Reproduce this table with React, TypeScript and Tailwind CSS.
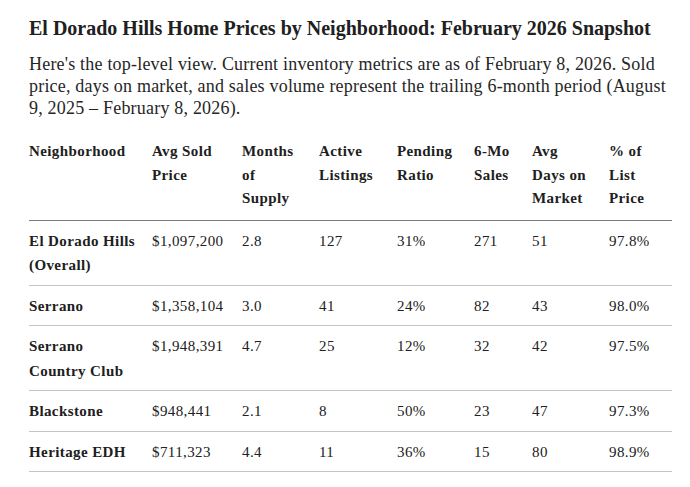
import React from 'react';

const headers = [
  { lines: ['Neighborhood'], w: 'w-[123px]' },
  { lines: ['Avg Sold', 'Price'], w: 'w-[90px]' },
  { lines: ['Months', 'of', 'Supply'], w: 'w-[77px]' },
  { lines: ['Active', 'Listings'], w: 'w-[78px]' },
  { lines: ['Pending', 'Ratio'], w: 'w-[77px]' },
  { lines: ['6-Mo', 'Sales'], w: 'w-[58px]' },
  { lines: ['Avg', 'Days on', 'Market'], w: 'w-[77px]' },
  { lines: ['% of', 'List', 'Price'], w: 'w-[63px]' },
];

const rows = [
  [['El Dorado Hills', '(Overall)'], '$1,097,200', '2.8', '127', '31%', '271', '51', '97.8%'],
  [['Serrano'], '$1,358,104', '3.0', '41', '24%', '82', '43', '98.0%'],
  [['Serrano', 'Country Club'], '$1,948,391', '4.7', '25', '12%', '32', '42', '97.5%'],
  [['Blackstone'], '$948,441', '2.1', '8', '50%', '23', '47', '97.3%'],
  [['Heritage EDH'], '$711,323', '4.4', '11', '36%', '15', '80', '98.9%'],
] as const;

const App: React.FC = () => {
  return (
    <div className="min-h-screen bg-white text-[#202020] font-['Liberation_Serif',serif] px-[29px] pt-[15px]">
      <div className="w-[643px]">
        <h2 className="text-[20px] font-bold leading-[26px] whitespace-nowrap">
          El Dorado Hills Home Prices by Neighborhood: February 2026 Snapshot
        </h2>
        <p className="mt-[12px] text-[18px] leading-[22px] tracking-[0.2px] text-[#262626] whitespace-nowrap">
          Here's the top-level view. Current inventory metrics are as of February 8, 2026. Sold
          <br />
          price, days on market, and sales volume represent the trailing 6-month period (August
          <br />
          9, 2025 – February 8, 2026).
        </p>

        <table className="mt-[13px] w-[643px] table-fixed border-collapse text-[15px] tracking-[0.4px]">
          <thead>
            <tr className="border-b border-[#7a7a7a]">
              {headers.map((h) => (
                <th
                  key={h.lines.join(' ')}
                  className={`${h.w} pr-[8px] pt-[8px] pb-[9px] text-left align-top font-bold leading-[23.5px]`}
                >
                  {h.lines.map((l) => (
                    <div key={l}>{l}</div>
                  ))}
                </th>
              ))}
            </tr>
          </thead>
          <tbody>
            {rows.map((r) => (
              <tr key={r[0].join(' ')} className="border-b border-[#c4c4c4]">
                <td className="pr-[8px] pt-[8px] pb-[7px] align-top font-bold leading-[24.5px]">
                  {r[0].map((l) => (
                    <div key={l}>{l}</div>
                  ))}
                </td>
                {r.slice(1).map((c, i) => (
                  <td key={i} className="pr-[8px] pt-[8px] pb-[7px] align-top leading-[24.5px]">
                    {c as string}
                  </td>
                ))}
              </tr>
            ))}
          </tbody>
        </table>
      </div>
    </div>
  );
};

export default App;
